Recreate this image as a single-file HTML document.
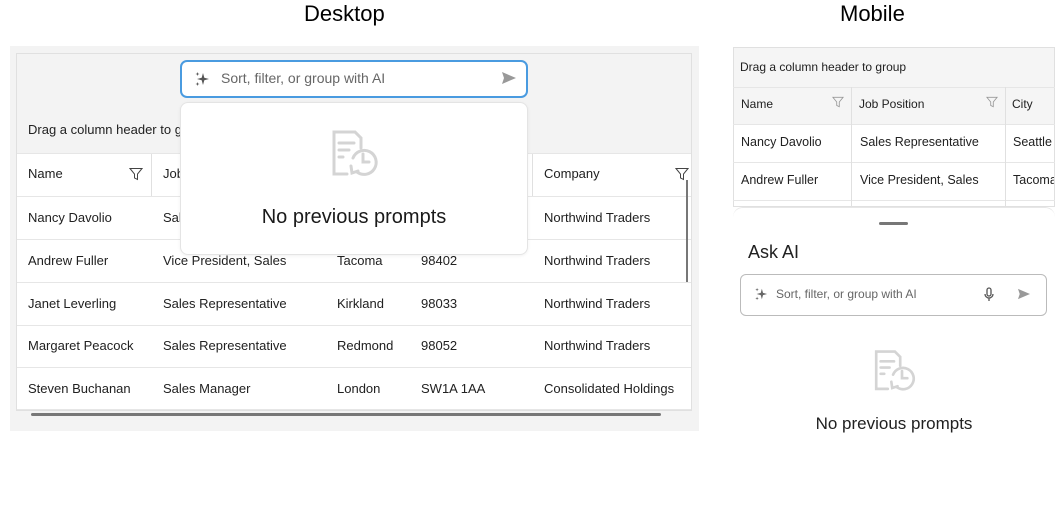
<!DOCTYPE html>
<html><head><meta charset="utf-8"><style>
*{box-sizing:border-box;margin:0;padding:0}
body{width:1064px;height:527px;background:#fff;position:relative;overflow:hidden;font-family:"Segoe UI","Liberation Sans",sans-serif;color:#212121}
.a{position:absolute}
.t{font-size:13px;white-space:nowrap}
.hl{position:absolute;height:1px;background:#e6e6e6}
.vl{position:absolute;width:1px;background:#e0e0e0}
</style></head><body>
<div class="a" style="left:304px;top:1px;font-size:22px;color:#000">Desktop</div>
<div class="a" style="left:840px;top:1px;font-size:22px;color:#000">Mobile</div>

<!-- desktop -->
<div class="a" style="left:10px;top:46px;width:689px;height:385px;background:#f3f3f3"></div>
<div class="a" style="left:16px;top:53px;width:676px;height:358px;background:#fff;border:1px solid #e0e0e0"></div>
<div class="a" style="left:17px;top:54px;width:674px;height:99px;background:#f3f3f3"></div>
<div class="a t" style="left:28px;top:122px">Drag a column header to group</div>
<div class="hl" style="left:17px;top:153px;width:674px"></div>
<div class="vl" style="left:151px;top:154px;height:42px"></div>
<div class="vl" style="left:532px;top:154px;height:42px"></div>
<div class="a t" style="left:28px;top:166px">Name</div>
<div class="a t" style="left:163px;top:166px">Job Position</div>
<div class="a t" style="left:544px;top:166px">Company</div>
<svg class="a" style="left:129px;top:167px" width="14" height="14" viewBox="0 0 14 14"><path d="M1 1.5H13L8.5 7V12.5L5.5 11V7Z" fill="none" stroke="#444" stroke-width="1"/></svg>
<svg class="a" style="left:675px;top:167px" width="14" height="14" viewBox="0 0 14 14"><path d="M1 1.5H13L8.5 7V12.5L5.5 11V7Z" fill="none" stroke="#444" stroke-width="1"/></svg>
<div class="hl" style="left:17px;top:196px;width:674px"></div>
<div class="hl" style="left:17px;top:239px;width:674px"></div>
<div class="hl" style="left:17px;top:282px;width:674px"></div>
<div class="hl" style="left:17px;top:325px;width:674px"></div>
<div class="hl" style="left:17px;top:367px;width:674px"></div>
<div class="hl" style="left:17px;top:409px;width:674px"></div>
<div class="a t" style="left:28px;top:210px">Nancy Davolio</div><div class="a t" style="left:163px;top:210px">Sales Representative</div><div class="a t" style="left:337px;top:210px">Seattle</div><div class="a t" style="left:421px;top:210px">98101</div><div class="a t" style="left:544px;top:210px">Northwind Traders</div>
<div class="a t" style="left:28px;top:253px">Andrew Fuller</div><div class="a t" style="left:163px;top:253px">Vice President, Sales</div><div class="a t" style="left:337px;top:253px">Tacoma</div><div class="a t" style="left:421px;top:253px">98402</div><div class="a t" style="left:544px;top:253px">Northwind Traders</div>
<div class="a t" style="left:28px;top:296px">Janet Leverling</div><div class="a t" style="left:163px;top:296px">Sales Representative</div><div class="a t" style="left:337px;top:296px">Kirkland</div><div class="a t" style="left:421px;top:296px">98033</div><div class="a t" style="left:544px;top:296px">Northwind Traders</div>
<div class="a t" style="left:28px;top:338px">Margaret Peacock</div><div class="a t" style="left:163px;top:338px">Sales Representative</div><div class="a t" style="left:337px;top:338px">Redmond</div><div class="a t" style="left:421px;top:338px">98052</div><div class="a t" style="left:544px;top:338px">Northwind Traders</div>
<div class="a t" style="left:28px;top:381px">Steven Buchanan</div><div class="a t" style="left:163px;top:381px">Sales Manager</div><div class="a t" style="left:337px;top:381px">London</div><div class="a t" style="left:421px;top:381px">SW1A 1AA</div><div class="a t" style="left:544px;top:381px">Consolidated Holdings</div>
<div class="a" style="left:31px;top:413px;width:630px;height:3px;background:#777;border-radius:2px"></div>
<div class="a" style="left:686px;top:180px;width:2px;height:102px;background:#777"></div>

<!-- popup -->
<div class="a" style="left:180px;top:102px;width:348px;height:153px;background:#fff;border:1px solid #e4e4e4;border-radius:8px;box-shadow:0 1px 3px rgba(0,0,0,.06)"></div>
<svg class="a" style="left:327px;top:128px" width="54" height="54" viewBox="0 0 54 54" fill="none" stroke="#d4d4d4" stroke-width="3" stroke-linecap="round"><path d="M20 46H7V4H28L34 10V20"/><path d="M12 15H27M12 22H22M12 29H16"/><path d="M26 30A12 12 0 1 1 30 44"/><path d="M36 26V34H42"/><path d="M24 38L25 45L31 43"/></svg>
<div class="a" style="left:180px;top:206px;width:348px;text-align:center;font-size:20px;color:#1a1a1a">No previous prompts</div>
<div class="a" style="left:180px;top:60px;width:348px;height:38px;background:#fff;border:2px solid #4a9be0;border-radius:7px"></div>
<svg class="a" style="left:194px;top:71px" width="16" height="16" viewBox="0 0 16 16" fill="#555"><path d="M9 2L10.3 6.7L15 8L10.3 9.3L9 14L7.7 9.3L3 8L7.7 6.7Z"/><path d="M3.5 1L4 2.5L5.5 3L4 3.5L3.5 5L3 3.5L1.5 3L3 2.5Z"/><path d="M3.5 11L4 12.5L5.5 13L4 13.5L3.5 15L3 13.5L1.5 13L3 12.5Z"/></svg>
<div class="a" style="left:221px;top:70px;font-size:14px;color:#666">Sort, filter, or group with AI</div>
<svg class="a" style="left:501px;top:71px" width="16" height="14" viewBox="0 0 16 14"><path d="M1 1L15 7L1 13L3 7Z" fill="#999"/></svg>

<!-- mobile -->
<div class="a" style="left:733px;top:47px;width:322px;height:160px;background:#fff;border:1px solid #e0e0e0"></div>
<div class="a" style="left:734px;top:48px;width:320px;height:39px;background:#f5f5f5"></div>
<div class="a" style="left:734px;top:87px;width:320px;height:37px;background:#f5f5f5"></div>
<div class="hl" style="left:733px;top:87px;width:322px"></div>
<div class="hl" style="left:733px;top:124px;width:322px"></div>
<div class="hl" style="left:733px;top:162px;width:322px"></div>
<div class="hl" style="left:733px;top:200px;width:322px"></div>
<div class="vl" style="left:851px;top:87px;height:120px"></div>
<div class="vl" style="left:1005px;top:87px;height:120px"></div>
<div class="a" style="left:740px;top:60px;font-size:12px">Drag a column header to group</div>
<div class="a" style="left:741px;top:97px;font-size:12px">Name</div>
<div class="a" style="left:859px;top:97px;font-size:12px">Job Position</div>
<div class="a" style="left:1012px;top:97px;font-size:12px">City</div>
<svg class="a" style="left:832px;top:96px" width="12" height="12" viewBox="0 0 14 14"><path d="M1 1.5H13L8.5 7V12.5L5.5 11V7Z" fill="none" stroke="#999"/></svg>
<svg class="a" style="left:986px;top:96px" width="12" height="12" viewBox="0 0 14 14"><path d="M1 1.5H13L8.5 7V12.5L5.5 11V7Z" fill="none" stroke="#999"/></svg>
<div class="a" style="left:741px;top:135px;font-size:12.5px">Nancy Davolio</div><div class="a" style="left:860px;top:135px;font-size:12.5px">Sales Representative</div><div class="a" style="left:1013px;top:135px;font-size:12.5px;width:41px;overflow:hidden;white-space:nowrap">Seattle</div>
<div class="a" style="left:741px;top:173px;font-size:12.5px">Andrew Fuller</div><div class="a" style="left:860px;top:173px;font-size:12.5px">Vice President, Sales</div><div class="a" style="left:1013px;top:173px;font-size:12.5px;width:41px;overflow:hidden;white-space:nowrap">Tacoma</div>
<div class="a" style="left:733px;top:207px;width:322px;height:320px;background:#fff;border-radius:10px 10px 0 0;border-top:1px solid #e6e6e6"></div>
<div class="a" style="left:879px;top:222px;width:29px;height:3px;background:#777;border-radius:2px"></div>
<div class="a" style="left:748px;top:242px;font-size:18px">Ask AI</div>
<div class="a" style="left:740px;top:274px;width:307px;height:42px;border:1px solid #bbb;border-radius:6px"></div>
<svg class="a" style="left:754px;top:287px" width="14" height="14" viewBox="0 0 16 16" fill="#666"><path d="M9 2L10.3 6.7L15 8L10.3 9.3L9 14L7.7 9.3L3 8L7.7 6.7Z"/><path d="M3.5 1L4 2.5L5.5 3L4 3.5L3.5 5L3 3.5L1.5 3L3 2.5Z"/><path d="M3.5 11L4 12.5L5.5 13L4 13.5L3.5 15L3 13.5L1.5 13L3 12.5Z"/></svg>
<div class="a" style="left:776px;top:287px;font-size:12px;color:#666">Sort, filter, or group with AI</div>
<svg class="a" style="left:983px;top:287px" width="12" height="16" viewBox="0 0 12 16" fill="none" stroke="#555" stroke-width="1.3"><rect x="4" y="1" width="4" height="8" rx="2"/><path d="M2 7A4 4 0 0 0 10 7M6 11V14"/></svg>
<svg class="a" style="left:1017px;top:288px" width="14" height="12" viewBox="0 0 16 14"><path d="M1 1L15 7L1 13L3 7Z" fill="#999"/></svg>
<svg class="a" style="left:870px;top:348px" width="48" height="48" viewBox="0 0 54 54" fill="none" stroke="#d4d4d4" stroke-width="3" stroke-linecap="round"><path d="M20 46H7V4H28L34 10V20"/><path d="M12 15H27M12 22H22M12 29H16"/><path d="M26 30A12 12 0 1 1 30 44"/><path d="M36 26V34H42"/><path d="M24 38L25 45L31 43"/></svg>
<div class="a" style="left:733px;top:414px;width:322px;text-align:center;font-size:17px">No previous prompts</div>
</body></html>
